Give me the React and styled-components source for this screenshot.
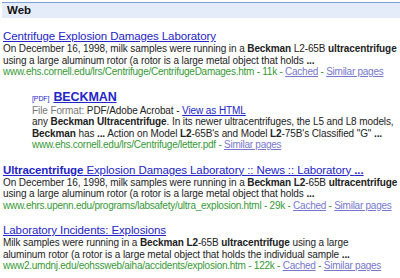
import React from "react";
import styled, { createGlobalStyle } from "styled-components";

const GlobalStyle = createGlobalStyle`
  html, body {
    margin: 0;
    padding: 0;
    background: #fff;
  }
  body {
    font-family: "Liberation Sans", Arial, sans-serif;
    overflow: hidden;
  }
`;

const Page = styled.div`
  width: 400px;
  height: 278px;
  padding: 2px 0 0 2px;
  box-sizing: border-box;
`;

const Header = styled.div`
  border-top: 1px solid #7f9fdc;
  background: #e5ecf9;
  height: 15px;
  padding-left: 5px;
  font-size: 11.5px;
  font-weight: bold;
  line-height: 15px;
  color: #111;
`;

const Results = styled.div`
  display: flex;
  flex-direction: column;
  gap: 13px;
  padding: 12px 0 0 1px;
`;

const Result = styled.div`
  padding-left: ${(p) => (p.$indent ? "29px" : "0")};
`;

const Title = styled.div`
  font-size: 11.5px;
  line-height: 13px;
  letter-spacing: -0.1px;
  color: #2424c8;
  white-space: nowrap;
`;

const TitleLink = styled.a`
  color: inherit;
  text-decoration: underline;
  font-weight: ${(p) => (p.$bold ? "bold" : "normal")};
  font-size: ${(p) => (p.$bold ? "12.5px" : "inherit")};
`;

const FileTag = styled.span`
  font-size: 7px;
  color: #2424c8;
  margin-right: 4px;
`;

const Line = styled.div`
  font-size: 10px;
  line-height: 11.5px;
  letter-spacing: -0.1px;
  color: #222;
  white-space: nowrap;
`;

const Gray = styled.span`
  color: #777;
`;

const Meta = styled(Line)`
  color: #369936;
  letter-spacing: -0.25px;
`;

const SubLink = styled.a`
  color: ${(p) => (p.$strong ? "#2424c8" : "#7777cc")};
  text-decoration: underline;
`;

const Dash = () => <> - </>;

const MetaLinks = ({ url, size, cached = true }) => (
  <Meta>
    {url}
    {size && (
      <>
        <Dash />
        {size}
      </>
    )}
    {cached && (
      <>
        <Dash />
        <SubLink>Cached</SubLink>
      </>
    )}
    <Dash />
    <SubLink>Similar pages</SubLink>
  </Meta>
);

const App = () => (
  <Page>
    <GlobalStyle />
    <Header>Web</Header>
    <Results>
      <Result>
        <Title>
          <TitleLink>Centrifuge Explosion Damages Laboratory</TitleLink>
        </Title>
        <Line>
          On December 16, 1998, milk samples were running in a <b>Beckman</b> L2-65B{" "}
          <b>ultracentrifuge</b>
        </Line>
        <Line>
          using a large aluminum rotor (a rotor is a large metal object that holds <b>...</b>
        </Line>
        <MetaLinks url="www.ehs.cornell.edu/lrs/Centrifuge/CentrifugeDamages.htm" size="11k" />
      </Result>

      <Result $indent>
        <Title>
          <FileTag>[PDF]</FileTag>
          <TitleLink $bold>BECKMAN</TitleLink>
        </Title>
        <Line>
          <Gray>File Format:</Gray> PDF/Adobe Acrobat - <SubLink $strong>View as HTML</SubLink>
        </Line>
        <Line>
          any <b>Beckman Ultracentrifuge</b>. In its newer ultracentrifuges, the L5 and L8 models,
        </Line>
        <Line>
          <b>Beckman</b> has <b>...</b> Action on Model <b>L2</b>-65B's and Model <b>L2</b>-75B's
          Classified "G" <b>...</b>
        </Line>
        <MetaLinks url="www.ehs.cornell.edu/lrs/Centrifuge/letter.pdf" cached={false} />
      </Result>

      <Result>
        <Title>
          <TitleLink>
            <b>Ultracentrifuge</b> Explosion Damages Laboratory :: News :: Laboratory <b>...</b>
          </TitleLink>
        </Title>
        <Line>
          On December 16, 1998, milk samples were running in a <b>Beckman L2</b>-65B{" "}
          <b>ultracentrifuge</b>
        </Line>
        <Line>
          using a large aluminum rotor (a rotor is a large metal object that holds <b>...</b>
        </Line>
        <MetaLinks url="www.ehrs.upenn.edu/programs/labsafety/ultra_explosion.html" size="29k" />
      </Result>

      <Result>
        <Title>
          <TitleLink>Laboratory Incidents: Explosions</TitleLink>
        </Title>
        <Line>
          Milk samples were running in a <b>Beckman L2</b>-65B <b>ultracentrifuge</b> using a large
        </Line>
        <Line>
          aluminum rotor (a rotor is a large metal object that holds the individual sample{" "}
          <b>...</b>
        </Line>
        <MetaLinks url="www2.umdnj.edu/eohssweb/aiha/accidents/explosion.htm" size="122k" />
      </Result>
    </Results>
  </Page>
);

export default App;
